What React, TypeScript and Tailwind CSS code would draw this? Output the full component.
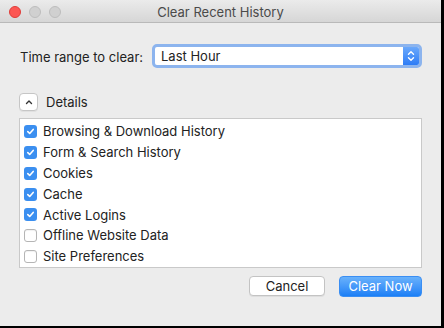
import React from "react";

type Item = { label: string; checked: boolean };

const items: Item[] = [
  { label: "Browsing & Download History", checked: true },
  { label: "Form & Search History", checked: true },
  { label: "Cookies", checked: true },
  { label: "Cache", checked: true },
  { label: "Active Logins", checked: true },
  { label: "Offline Website Data", checked: false },
  { label: "Site Preferences", checked: false },
];

function Check({ checked }: { checked: boolean }) {
  if (!checked) {
    return (
      <span className="w-[13px] h-[13px] rounded-[3px] border border-[#b5b5b5] bg-white shadow-[inset_0_1px_1px_rgba(0,0,0,0.06)]" />
    );
  }
  return (
    <span className="w-[13px] h-[13px] rounded-[3px] bg-[#3b8ff0] flex items-center justify-center">
      <svg width="9" height="9" viewBox="0 0 9 9">
        <path d="M1.8 4.6 L3.7 6.5 L7.2 2.4" fill="none" stroke="white" strokeWidth="1.6" strokeLinecap="round" strokeLinejoin="round" />
      </svg>
    </span>
  );
}

export default function App() {
  const [rows, setRows] = React.useState(items);

  return (
    <div
      className="w-[444px] h-[328px] bg-[#ececec] flex flex-col border-r-[3px] border-b-2 border-black text-[13px] text-[#222]"
      style={{ fontFamily: '"Inter", "Liberation Sans", sans-serif' }}
    >
      {/* title bar */}
      <div className="h-[23px] shrink-0 flex items-center relative bg-gradient-to-b from-[#ebebeb] to-[#d6d6d6] border-b border-[#b9b9b9] pt-[2px]">
        <div className="flex gap-[8px] pl-[9px]">
          <span className="w-[12px] h-[12px] rounded-full bg-[#fc5753] border border-[#df3d39]" />
          <span className="w-[12px] h-[12px] rounded-full bg-[#d0d0d0] border border-[#bdbdbd]" />
          <span className="w-[12px] h-[12px] rounded-full bg-[#d0d0d0] border border-[#bdbdbd]" />
        </div>
        <div className="absolute inset-0 pt-[3px] flex items-center justify-center text-[#4a4a4a]">
          Clear Recent History
        </div>
      </div>

      <div className="flex flex-col pl-[19px] pr-[19px]">
        {/* time range */}
        <div className="flex items-center mt-[21px] h-[24px]">
          <span className="w-[133px] pl-[1px] pt-[3px]">Time range to clear:</span>
          <div className="flex-1 h-[24px] flex rounded-[5px] border-[3px] border-[#8cb4ee] bg-white overflow-hidden">
            <span className="flex-1 flex items-center pl-[6px] pt-[2px]">Last Hour</span>
            <span className="w-[16px] bg-gradient-to-b from-[#6aa8fb] to-[#2d7cf6] flex items-center justify-center">
              <svg width="8" height="12" viewBox="0 0 8 12">
                <path d="M1.5 4.2 L4 1.8 L6.5 4.2 M1.5 7.8 L4 10.2 L6.5 7.8" fill="none" stroke="white" strokeWidth="1.4" strokeLinecap="round" strokeLinejoin="round" />
              </svg>
            </span>
          </div>
        </div>

        {/* details toggle */}
        <div className="flex items-center gap-[8px] mt-[25px] h-[18px]">
          <span className="w-[19px] h-[18px] rounded-[4px] bg-white border border-[#c6c6c6] flex items-center justify-center shadow-[0_1px_0_rgba(0,0,0,0.05)]">
            <svg width="8" height="6" viewBox="0 0 8 6">
              <path d="M1.5 4.5 L4 2 L6.5 4.5" fill="none" stroke="#333" strokeWidth="1.4" strokeLinecap="round" strokeLinejoin="round" />
            </svg>
          </span>
          <span className="pt-[1px]">Details</span>
        </div>

        {/* list */}
        <div className="mt-[7px] h-[150px] bg-white border border-[#c9c9c9] flex flex-col pt-[2px]">
          {rows.map((row, i) => (
            <div
              key={row.label}
              className="h-[21px] flex items-center gap-[6px] pl-[4px] cursor-default"
              onClick={() =>
                setRows(rows.map((r, j) => (j === i ? { ...r, checked: !r.checked } : r)))
              }
            >
              <Check checked={row.checked} />
              <span className="pt-[1px]">{row.label}</span>
            </div>
          ))}
        </div>

        {/* buttons */}
        <div className="flex justify-end gap-[14px] mt-[8px]">
          <button className="w-[76px] h-[20px] rounded-[4px] bg-white border border-[#c3c3c3] shadow-[0_1px_0_rgba(0,0,0,0.06)] text-[#222] leading-none">
            Cancel
          </button>
          <button className="w-[83px] h-[21px] rounded-[4px] bg-gradient-to-b from-[#68b1fb] to-[#1a7ff6] border border-[#3a8ef3] text-white leading-none">
            Clear Now
          </button>
        </div>
      </div>
    </div>
  );
}
